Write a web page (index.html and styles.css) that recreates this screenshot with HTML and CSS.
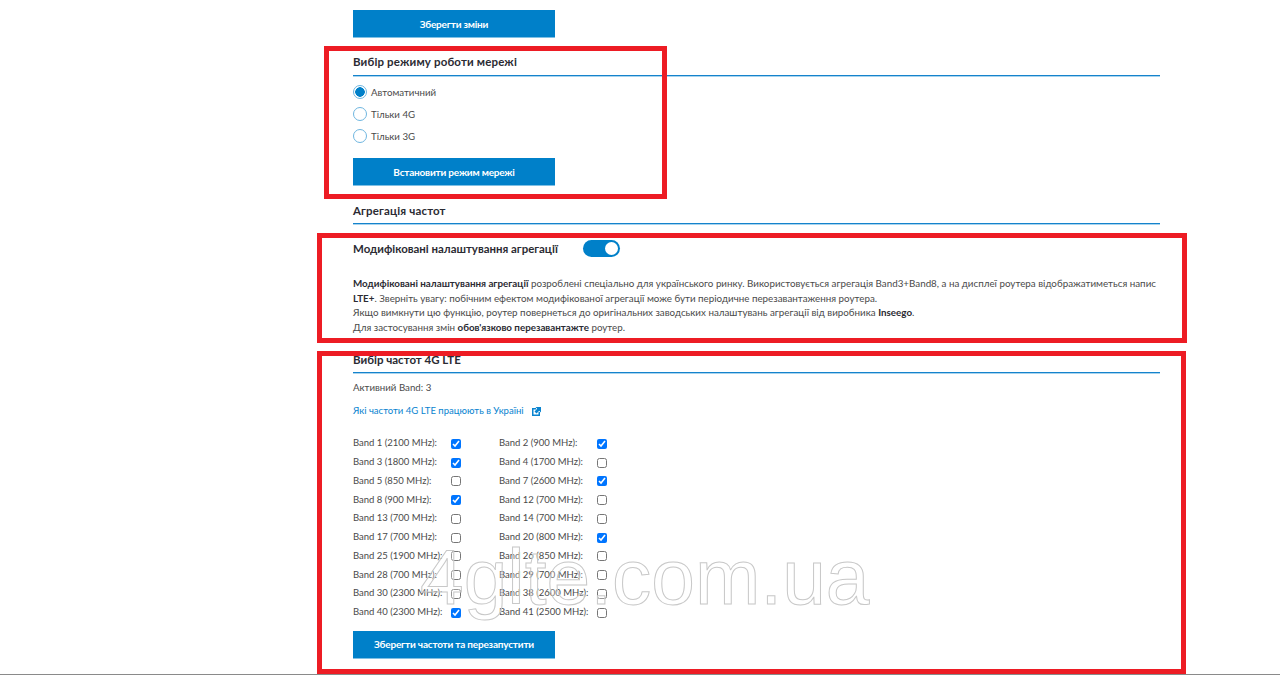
FILE: index.html
```html
<!DOCTYPE html>
<html lang="uk">
<head>
  <meta charset="UTF-8" />
  <meta name="viewport" content="width=device-width, initial-scale=1.0" />
  <title>Налаштування мережі</title>
  <link rel="stylesheet" href="styles.css">
</head>
<body>
  <main class="page">
    <button class="btn btn-first">Зберегти зміни</button>

    <!-- Network mode -->
    <h2 class="section-title title-mode">Вибір режиму роботи мережі</h2>
    <div class="radio-list">
      <label class="radio-row"><input type="radio" name="mode" checked>Автоматичний</label>
      <label class="radio-row"><input type="radio" name="mode">Тільки 4G</label>
      <label class="radio-row"><input type="radio" name="mode">Тільки 3G</label>
    </div>
    <button class="btn btn-mode">Встановити режим мережі</button>

    <!-- Aggregation -->
    <h2 class="section-title title-agg">Агрегація частот</h2>
    <div class="toggle-row">
      <span class="toggle-label">Модифіковані налаштування агрегації</span>
      <span class="toggle"><span class="toggle-knob"></span></span>
    </div>
    <p class="agg-text">
      <b>Модифіковані налаштування агрегації</b> розроблені спеціально для українського ринку. Використовується агрегація Band3+Band8, а на дисплеї роутера відображатиметься напис <b>LTE+</b>. Зверніть увагу: побічним ефектом модифікованої агрегації може бути періодичне перезавантаження роутера.<br>
      Якщо вимкнути цю функцію, роутер повернеться до оригінальних заводських налаштувань агрегації від виробника <b>Inseego</b>.<br>
      Для застосування змін <b>обов'язково перезавантажте</b> роутер.
    </p>

    <!-- 4G bands -->
    <h2 class="section-title title-bands">Вибір частот 4G LTE</h2>
    <div class="active-band">Активний Band: 3</div>
    <a class="bands-link" href="#">Які частоти 4G LTE працюють в Україні
      <svg class="link-icon" viewBox="0 0 9 9" width="9" height="9"><path fill="#0a84d0" d="M0 1h4v1.500H1.500v5h5V5H8v4H0z"/><path fill="#0a84d0" d="M3.500 0H9v5.500L7.200 3.800 4.500 6.500 2.500 4.500l2.700-2.700z"/></svg>
    </a>
    <div class="band-grid">
      <label class="band"><span>Band 1 (2100 MHz):</span><input type="checkbox" checked></label>
      <label class="band"><span>Band 2 (900 MHz):</span><input type="checkbox" checked></label>
      <label class="band"><span>Band 3 (1800 MHz):</span><input type="checkbox" checked></label>
      <label class="band"><span>Band 4 (1700 MHz):</span><input type="checkbox"></label>
      <label class="band"><span>Band 5 (850 MHz):</span><input type="checkbox"></label>
      <label class="band"><span>Band 7 (2600 MHz):</span><input type="checkbox" checked></label>
      <label class="band"><span>Band 8 (900 MHz):</span><input type="checkbox" checked></label>
      <label class="band"><span>Band 12 (700 MHz):</span><input type="checkbox"></label>
      <label class="band"><span>Band 13 (700 MHz):</span><input type="checkbox"></label>
      <label class="band"><span>Band 14 (700 MHz):</span><input type="checkbox"></label>
      <label class="band"><span>Band 17 (700 MHz):</span><input type="checkbox"></label>
      <label class="band"><span>Band 20 (800 MHz):</span><input type="checkbox" checked></label>
      <label class="band"><span>Band 25 (1900 MHz):</span><input type="checkbox"></label>
      <label class="band"><span>Band 26 (850 MHz):</span><input type="checkbox"></label>
      <label class="band"><span>Band 28 (700 MHz):</span><input type="checkbox"></label>
      <label class="band"><span>Band 29 (700 MHz):</span><input type="checkbox"></label>
      <label class="band"><span>Band 30 (2300 MHz):</span><input type="checkbox"></label>
      <label class="band"><span>Band 38 (2600 MHz):</span><input type="checkbox"></label>
      <label class="band"><span>Band 40 (2300 MHz):</span><input type="checkbox" checked></label>
      <label class="band"><span>Band 41 (2500 MHz):</span><input type="checkbox"></label>
    </div>
    <button class="btn btn-bands">Зберегти частоти та перезапустити</button>
  </main>

  <!-- Annotations drawn over the page -->
  <div class="frame frame-mode"></div>
  <div class="frame frame-agg"></div>
  <div class="frame frame-bands"></div>
  <div class="watermark">4glte.com.ua</div>
  <div class="window-edge"></div>
</body>
</html>
```

FILE: styles.css
```css
/* Variables */
:root {
  --accent: #0080c9;
  --line: #1583cc;
  --text: #4a4a4a;
  --title: #2b2b33;
  --red: #ed1c24;
}
html, body {
  height: 100%;
}
body {
  margin: 0;
  background: #fff;
  color: var(--text);
  font-family: 'Lato', 'Open Sans', sans-serif;
  font-size: 9.700px;
  overflow: hidden;
  position: relative;
}
.page {
  margin-left: 353px;
  width: 807px;
  padding-top: 10px;
}
/* Buttons */
.btn {
  display: block;
  width: 202px;
  height: 28px;
  border: none;
  border-bottom: 1px solid #7fc0e4;
  padding: 0;
  background: var(--accent);
  color: #fff;
  font-family: inherit;
  font-size: 10px;
  font-weight: 700;
  letter-spacing: -0.2px;
  cursor: pointer;
}
.btn-mode { margin-top: 11px; }
.btn-bands { margin-top: 10px; }
/* Section titles */
.section-title {
  margin: 0;
  height: 27px;
  box-sizing: border-box;
  padding-top: 5px;
  border-bottom: 1px solid var(--line);
  box-shadow: 0 1px 0 #a8d4ee;
  color: var(--title);
  font-size: 11.500px;
  letter-spacing: 0.15px;
  line-height: 15px;
  font-weight: 700;
}
.title-mode { margin-top: 11px; }
.title-agg { margin-top: 12px; height: 26px; }
.title-bands { margin-top: 12px; padding-top: 6px; letter-spacing: 0; }
/* Radios */
.radio-list {
  margin-top: 5px;
}
.radio-row {
  display: flex;
  align-items: center;
  gap: 4px;
  height: 22px;
}
.radio-row input {
  appearance: none;
  margin: 0;
  width: 14px;
  height: 14px;
  border: 1px solid #6fb6e0;
  border-radius: 50%;
  background: #fff;
}
.radio-row input:checked {
  background: radial-gradient(circle, var(--accent) 0 4.500px, #fff 5px);
}
/* Toggle */
.toggle-row {
  display: flex;
  align-items: center;
  height: 18px;
  margin-top: 15px;
}
.toggle-label {
  width: 230px;
  color: var(--title);
  font-size: 11.450px;
  font-weight: 700;
}
.toggle {
  display: flex;
  align-items: center;
  justify-content: flex-end;
  width: 37px;
  height: 17px;
  border-radius: 9px;
  background: var(--accent);
  padding-right: 2px;
  box-sizing: border-box;
}
.toggle-knob {
  width: 13px;
  height: 13px;
  border-radius: 50%;
  background: #fff;
}
/* Aggregation text */
.agg-text {
  margin: 19px 0 0;
  font-size: 9.800px;
  line-height: 14.600px;
}
.agg-text b {
  color: var(--title);
}
/* Bands */
.active-band {
  margin-top: 7px;
  line-height: 14px;
}
.bands-link {
  display: flex;
  align-items: center;
  gap: 8px;
  margin-top: 10px;
  line-height: 14px;
  font-size: 9.550px;
  color: #0a84d0;
  text-decoration: none;
}
.band-grid {
  display: grid;
  grid-template-columns: 146px 146px;
  grid-auto-rows: 18.750px;
  margin-top: 15px;
  width: 292px;
}
.band {
  display: flex;
  align-items: center;
}
.band span {
  width: 98px;
  white-space: nowrap;
  font-size: 9.500px;
}
.band input {
  margin: 2px 0 0;
  width: 10px;
  height: 10px;
}
/* Red annotation frames */
.frame {
  position: absolute;
  box-sizing: border-box;
  border: 5px solid var(--red);
}
.frame-mode { left: 324px; top: 46px; width: 343px; height: 153px; }
.frame-agg { left: 317px; top: 233px; width: 870px; height: 110px; }
.frame-bands { left: 317px; top: 351px; width: 869px; height: 323px; }
/* Watermark */
.watermark {
  position: absolute;
  left: 420px;
  top: 532px;
  color: rgba(255,255,255,0.25);
  -webkit-text-stroke: 1px #c8c8c8;
  font-family: 'Liberation Sans', sans-serif;
  font-size: 78.500px;
  line-height: 90px;
  white-space: nowrap;
}
.window-edge {
  position: absolute;
  left: 0;
  right: 0;
  top: 674px;
  height: 1px;
  background: #8a8a8a;
}
```
